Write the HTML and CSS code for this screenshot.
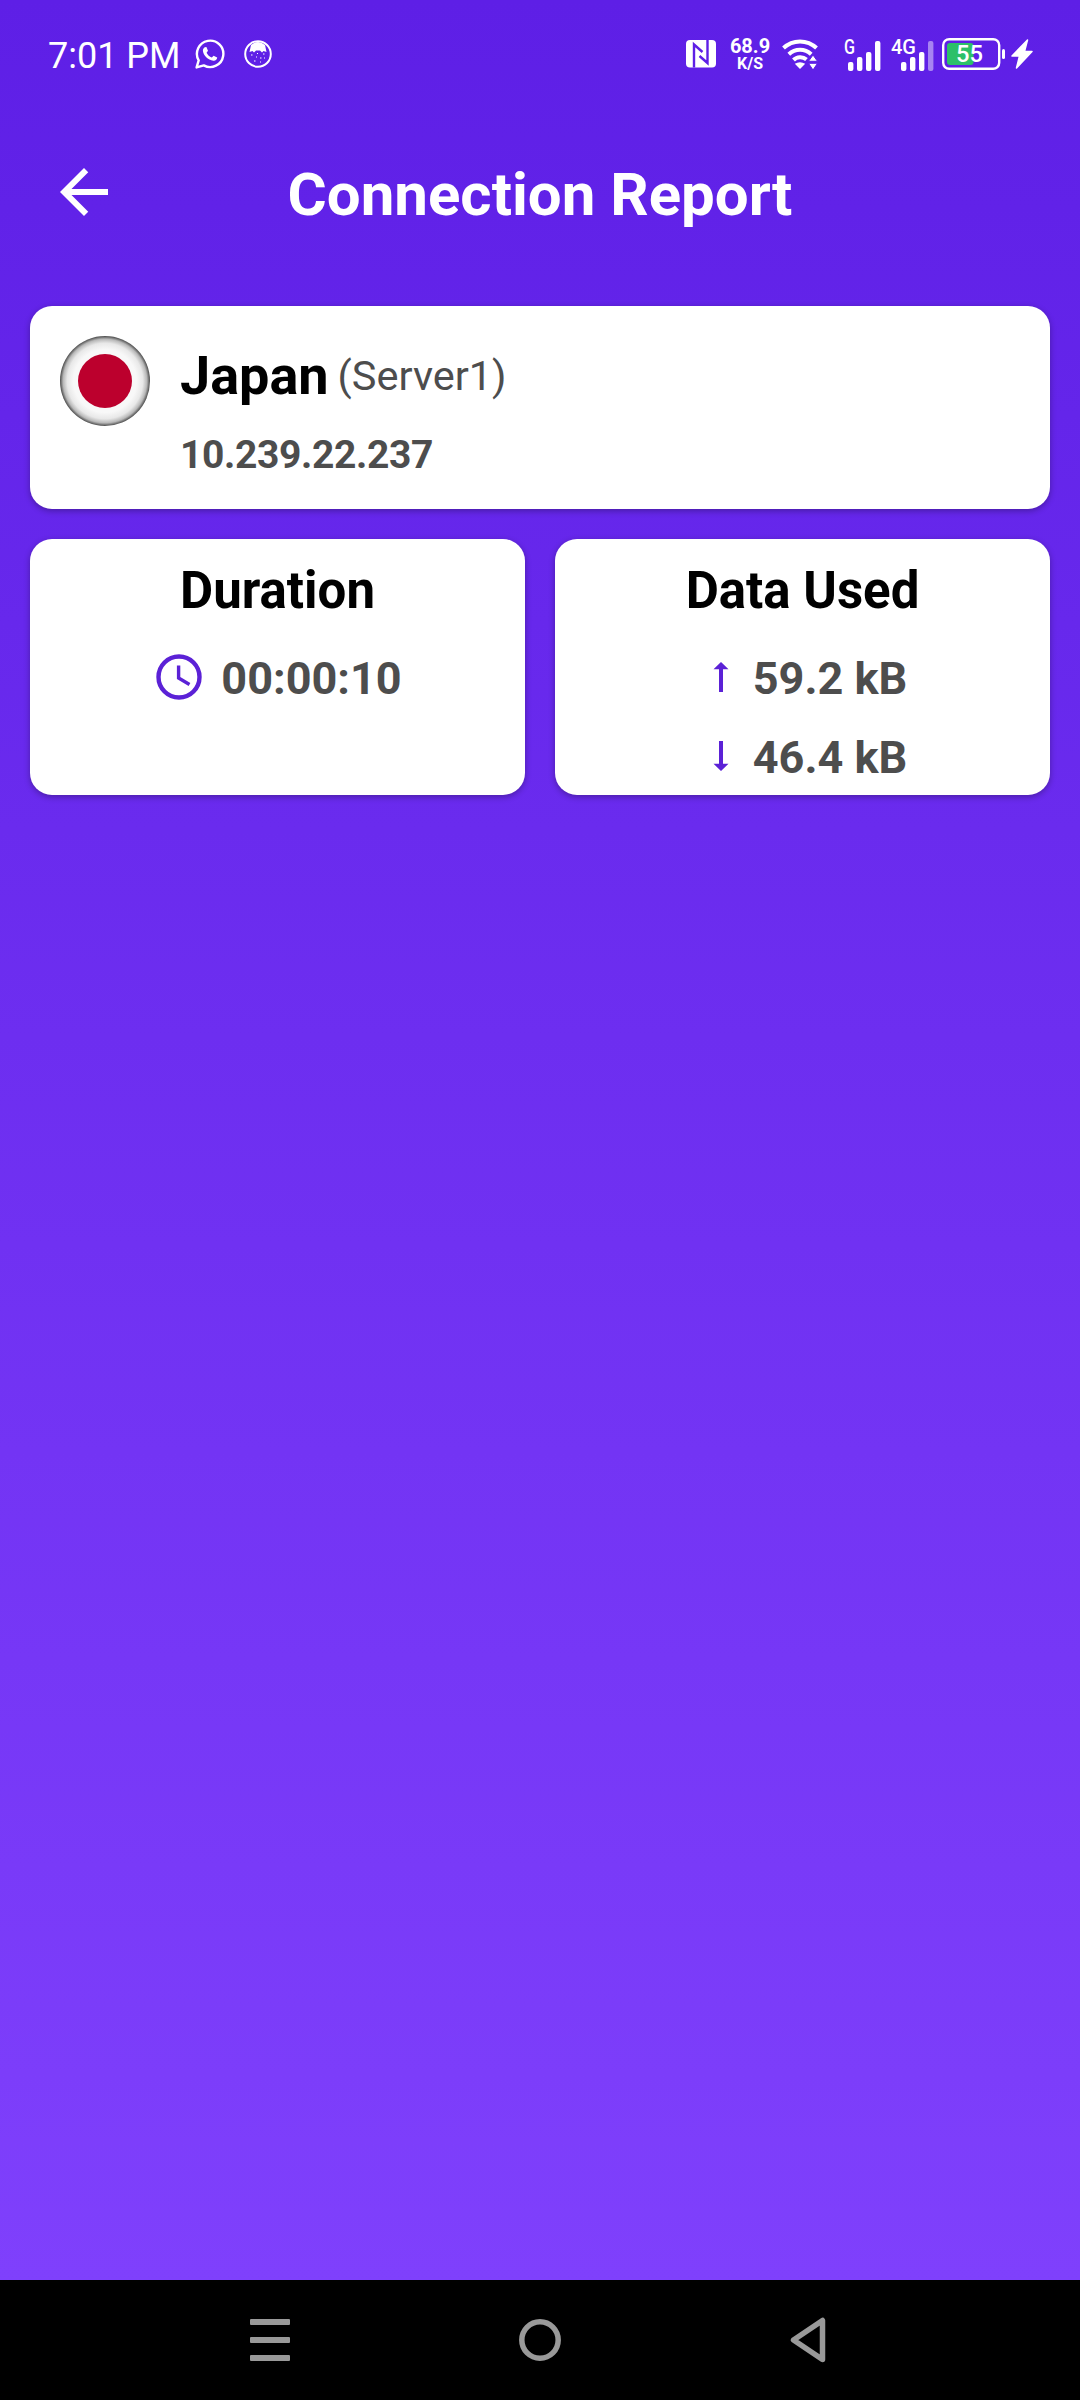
FILE: index.html
```html
<!DOCTYPE html>
<html lang="en">
<head>
    <meta charset="UTF-8">
    <meta name="viewport" content="width=device-width, initial-scale=1.0">
    <title>Connection Report</title>
    <link rel="stylesheet" href="styles.css">
</head>
<body>
    <div class="screen">
        <div class="status-bar">
            <div class="status-left">
                <span class="time">7:01 PM</span>
                <svg class="icon-whatsapp" width="30" height="30" viewBox="0 0 30 30" fill="none" stroke="white" stroke-width="2.4" stroke-linejoin="round">
                    <path d="M1.6 28.4 L3.7 21.4 A13.2 13.2 0 1 1 8.8 26.4 Z"></path>
                    <path d="M9.7 8.2 L11.4 8 L13 11.8 L11.6 13.8 C12.6 16 14.5 17.8 16.8 18.6 L18.6 16.8 L22.2 18.6 C22.2 20.8 20.4 21.9 18.4 21.7 C12.8 20.9 8.4 16.3 7.9 11.7 C7.8 10.2 8.6 8.9 9.7 8.2 Z" fill="white" stroke="none"></path>
                </svg>
                <svg class="icon-cat" width="28" height="28" viewBox="0 0 28 28">
                    <circle cx="14" cy="14" r="12.8" fill="none" stroke="white" stroke-width="2"></circle>
                    <path d="M7 5 Q14 -1 21 5 L22.5 12 L19.5 11 L18 12.5 L16 10.5 H12 L10 12.5 L8.5 11 L5.5 12 Z" fill="white"></path>
                    <path d="M7 15h1.5M19 14h1.5M12 17h1M16 18h1.5M10 21h1.5M16 22h1M20 18h1M13 13.5h1" stroke="white" stroke-width="1.2"></path>
                </svg>
            </div>
            <div class="status-right">
                <svg class="icon-nfc" width="30" height="28" viewBox="0 0 30 28">
                    <rect x="0" y="0" width="30" height="27.4" rx="4" fill="white"></rect>
                    <path d="M8 27.4 V4.5 L16.5 12 M21.5 0 V23 L13.5 16" fill="none" stroke="#5e1fe6" stroke-width="2.4"></path>
                </svg>
                <div class="net-speed">
                    <span class="speed">68.9</span>
                    <span class="unit">K/S</span>
                </div>
                <svg class="icon-wifi" width="37" height="30" viewBox="0 0 37 30" fill="none" stroke="white" stroke-width="4">
                    <path d="M1.5 9 A24 24 0 0 1 34.5 9"></path>
                    <path d="M6.8 15.2 A16.5 16.5 0 0 1 29.2 15.2"></path>
                    <path d="M11.5 21 A9.5 9.5 0 0 1 24.5 20.5"></path>
                    <path d="M18 30 L12.8 24.8 Q18 21.5 23.2 24.8 Z" fill="white" stroke="none"></path>
                    <path d="M31 16 L35.5 22.3 H26.5 Z M31 31 L35.5 24.3 H26.5 Z" fill="white" stroke="#5e1fe6" stroke-width="1"></path>
                </svg>
                <svg class="icon-signal" width="37" height="50" viewBox="0 -8 37 50" fill="white">
                    <text class="net-type" x="0" y="17" textLength="11" lengthAdjust="spacingAndGlyphs">G</text>
                    <rect x="4" y="25" width="5.4" height="9" rx="2"></rect>
                    <rect x="13" y="20" width="5.4" height="14" rx="2"></rect>
                    <rect x="22" y="15" width="5.4" height="19" rx="2"></rect>
                    <rect x="31" y="4" width="5.4" height="30" rx="2"></rect>
                </svg>
                <svg class="icon-signal-4g" width="43" height="50" viewBox="0 -8 43 50" fill="white">
                    <text class="net-type" x="0" y="17" textLength="25" lengthAdjust="spacingAndGlyphs">4G</text>
                    <rect x="10" y="25" width="5.4" height="9" rx="2"></rect>
                    <rect x="19" y="20" width="5.4" height="14" rx="2"></rect>
                    <rect x="28" y="15" width="5.4" height="19" rx="2"></rect>
                    <rect x="37" y="4" width="5.4" height="30" rx="2" opacity=".45"></rect>
                </svg>
                <svg class="icon-battery" width="64" height="32" viewBox="0 0 64 32">
                    <rect x="1.2" y="1.2" width="56" height="29.6" rx="6" fill="none" stroke="white" stroke-width="2.4"></rect>
                    <rect x="5" y="5" width="26.5" height="22" rx="3" fill="#2cc069"></rect>
                    <rect x="60" y="11" width="3" height="10" rx="1.5" fill="white"></rect>
                    <text class="level" x="14" y="24" textLength="27" lengthAdjust="spacingAndGlyphs" fill="white">55</text>
                </svg>
                <svg class="icon-bolt" width="22" height="30" viewBox="0 0 22 30" fill="white" stroke="white" stroke-width="1.5" stroke-linejoin="round">
                    <path d="M16.5 1 L1 17 H8.5 L5.5 29 L21 12.5 H13.5 Z"></path>
                </svg>
            </div>
        </div>

        <div class="header">
            <svg class="back" width="48" height="48" viewBox="4 4 16 16" fill="white">
                <path d="M20 11H7.83l5.59-5.59L12 4l-8 8 8 8 1.41-1.41L7.83 13H20v-2z"></path>
            </svg>
            <h1>Connection Report</h1>
        </div>

        <div class="content">
            <div class="card server-card">
                <svg class="flag" width="90" height="90" viewBox="0 0 90 90">
                    <defs>
                        <radialGradient id="rim">
                            <stop offset="0.7" stop-color="#f8f8f8"></stop>
                            <stop offset="0.84" stop-color="#e8e8e8"></stop>
                            <stop offset="0.93" stop-color="#b8b8b8"></stop>
                            <stop offset="1" stop-color="#4a4a4a"></stop>
                        </radialGradient>
                    </defs>
                    <circle cx="45" cy="45" r="45" fill="url(#rim)"></circle>
                    <circle cx="45" cy="45" r="27" fill="#bc002d"></circle>
                </svg>
                <div class="server-info">
                    <div class="server-name">
                        <span class="country">Japan</span>
                        <span class="server">(Server1)</span>
                    </div>
                    <div class="ip">10.239.22.237</div>
                </div>
            </div>

            <div class="stats">
                <div class="card stat-card">
                    <h2>Duration</h2>
                    <div class="stat-row">
                        <svg class="icon-clock" width="46" height="46" viewBox="0 0 46 46" fill="none" stroke="#5b21d6" stroke-width="4.4">
                            <circle cx="23" cy="23" r="20.5"></circle>
                            <path d="M22.6 11.5 V24 L33.5 30.5" stroke-width="3.4"></path>
                        </svg>
                        <span class="value duration">00:00:10</span>
                    </div>
                </div>
                <div class="card stat-card">
                    <h2>Data Used</h2>
                    <div class="stat-row data-row">
                        <svg class="icon-arrow" width="16" height="30" viewBox="0 0 16 30" fill="#5b21d6">
                            <path d="M8 0 L15.5 7.2 H10 V30 H6 V7.2 H.5 Z"></path>
                        </svg>
                        <span class="value">59.2 kB</span>
                    </div>
                    <div class="stat-row data-row">
                        <svg class="icon-arrow" width="16" height="30" viewBox="0 0 16 30" fill="#5b21d6">
                            <path d="M8 30 L15.5 22.8 H10 V0 H6 V22.8 H.5 Z"></path>
                        </svg>
                        <span class="value">46.4 kB</span>
                    </div>
                </div>
            </div>
        </div>
    </div>

    <div class="nav-bar">
        <svg width="40" height="42" viewBox="0 0 40 42" fill="#999">
            <rect x="0" y="0" width="40" height="6" rx="1"></rect>
            <rect x="0" y="18" width="40" height="6" rx="1"></rect>
            <rect x="0" y="36" width="40" height="6" rx="1"></rect>
        </svg>
        <svg width="42" height="42" viewBox="0 0 42 42" fill="none" stroke="#999" stroke-width="5.5">
            <circle cx="21" cy="21" r="18.2"></circle>
        </svg>
        <svg width="36" height="46" viewBox="0 0 36 46" fill="none" stroke="#999" stroke-width="5.5" stroke-linejoin="round">
            <path d="M32.5 3.5 V42.5 L3.5 23 Z"></path>
        </svg>
    </div>
</body>
</html>
```
FILE: styles.css
```css
* {
    margin: 0;
    padding: 0;
    box-sizing: border-box;
    font-family: Roboto, sans-serif;
}

body {
    height: 2400px;
    display: flex;
    flex-direction: column;
    background: black;
    overflow: hidden;
}

.screen {
    height: 2280px;
    background: linear-gradient(180deg, #5e1fe6 0%, #7f40fc 100%);
}

svg {
    display: block;
    flex-shrink: 0;
}

.status-bar {
    height: 108px;
    padding: 0 47px 0 48px;
    display: flex;
    justify-content: space-between;
    align-items: center;
    color: white;
}

.status-left,
.status-right {
    display: flex;
    align-items: center;
}

.time {
    font-size: 36px;
    line-height: 40px;
    padding-top: 3px;
}

.icon-whatsapp {
    margin-left: 14px;
}

.icon-cat {
    margin-left: 19px;
}

.net-speed {
    display: flex;
    flex-direction: column;
    align-items: center;
    width: 40px;
    margin: 0 12px 0 14px;
    font-weight: 700;
}

.speed {
    font-size: 20px;
    line-height: 20px;
}

.unit {
    font-size: 16px;
    line-height: 16px;
}

.net-type {
    font-size: 21px;
    font-weight: 500;
}

.icon-signal {
    margin-left: 25px;
}

.icon-signal-4g {
    margin-left: 10px;
}

.icon-battery {
    margin-left: 8px;
}

.level {
    font-size: 23px;
    font-weight: 500;
}

.icon-bolt {
    margin-left: 5px;
}

.header {
    height: 168px;
    padding: 0 60px;
    display: grid;
    grid-template-columns: 48px 1fr 48px;
    align-items: center;
    color: white;
}

h1 {
    padding-top: 5px;
    font-size: 60px;
    line-height: 70px;
    font-weight: 700;
    justify-self: center;
}

.content {
    padding: 30px;
    display: flex;
    flex-direction: column;
    gap: 30px;
}

.card {
    background: white;
    border-radius: 22px;
    box-shadow: 0 2px 6px rgba(0, 0, 0, 0.3);
}

.server-card {
    height: 203px;
    padding: 30px;
    display: flex;
    gap: 30px;
}

.server-name {
    display: flex;
    gap: 9px;
    height: 80px;
}

.country {
    font-size: 54px;
    line-height: 80px;
    font-weight: 700;
}

.server {
    font-size: 41.5px;
    line-height: 79px;
    color: #4d4d4d;
}

.ip {
    font-size: 39px;
    line-height: 78px;
    font-weight: 700;
    letter-spacing: -0.35px;
    color: #4d4d4d;
}

.stats {
    display: grid;
    grid-template-columns: 1fr 1fr;
    gap: 30px;
}

.stat-card {
    height: 256px;
    padding-top: 20px;
}

h2 {
    font-size: 51px;
    line-height: 64px;
    font-weight: 700;
    text-align: center;
    margin-bottom: 14px;
}

.stat-row {
    display: flex;
    justify-content: center;
    align-items: center;
    height: 79px;
    padding-left: 3px;
}

.data-row {
    padding-left: 15px;
}

.icon-clock {
    margin-right: 19px;
}

.icon-arrow {
    margin-right: 24px;
}

.value {
    padding-top: 5px;
    font-size: 45px;
    line-height: 74px;
    font-weight: 700;
    color: #4d4d4d;
}

.nav-bar {
    height: 120px;
    padding: 0 254px 0 250px;
    display: flex;
    justify-content: space-between;
    align-items: center;
    background: black;
}
```
